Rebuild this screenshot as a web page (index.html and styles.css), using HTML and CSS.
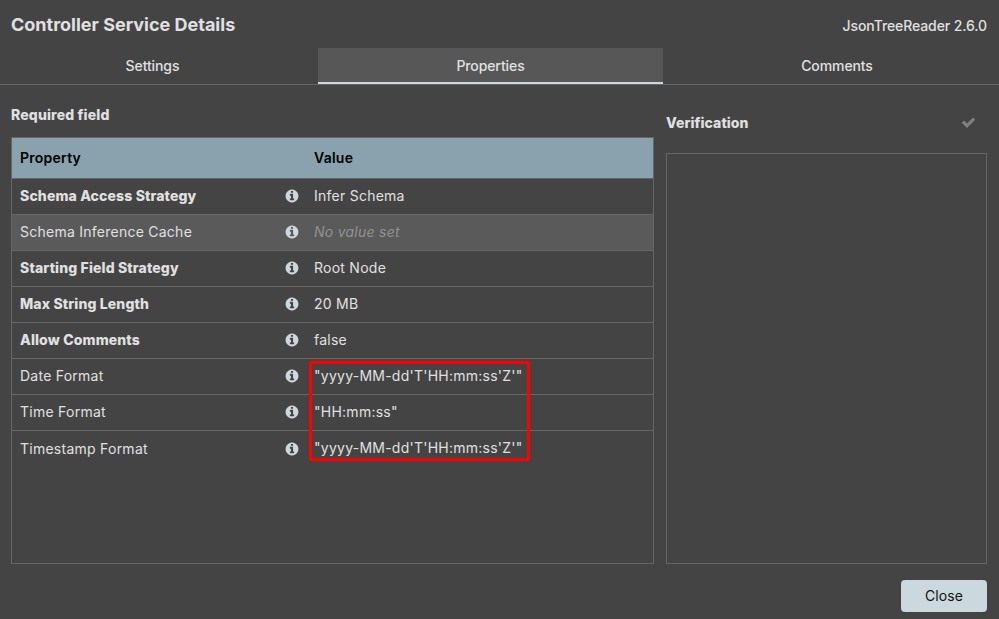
FILE: index.html
```html
<!DOCTYPE html>
<html lang="en">
<head>
<meta charset="utf-8">
<title>Controller Service Details</title>
<link rel="stylesheet" href="styles.css">
</head>
<body>
<svg width="0" height="0" class="defs">
  <symbol id="info" viewBox="-60 -60 1912 1912"><path d="M1152 1376v-160q0-14-9-23t-23-9h-96v-512q0-14-9-23t-23-9h-320q-14 0-23 9t-9 23v160q0 14 9 23t23 9h96v320h-96q-14 0-23 9t-9 23v160q0 14 9 23t23 9h448q14 0 23-9t9-23zm-128-896v-160q0-14-9-23t-23-9h-192q-14 0-23 9t-9 23v160q0 14 9 23t23 9h192q14 0 23-9t9-23zm640 416q0 209-103 385.5t-279.5 279.5-385.5 103-385.5-103-279.5-279.5-103-385.5 103-385.5 279.5-279.5 385.5-103 385.5 103 279.5 279.5 103 385.5z"/></symbol>
</svg>
<div class="dialog">
  <header class="header">
    <h2 class="title">Controller Service Details</h2>
    <span class="type">JsonTreeReader 2.6.0</span>
  </header>
  <nav class="tabs">
    <div class="tab settings">Settings</div>
    <div class="tab active">Properties</div>
    <div class="tab comments">Comments</div>
  </nav>
  <main class="content">
    <section class="properties">
      <div class="required">Required field</div>
      <div class="table">
        <div class="row head"><span class="name">Property</span><span>Value</span></div>
        <div class="row"><span class="name bold">Schema Access Strategy</span><svg class="info"><use href="#info"/></svg><span class="value">Infer Schema</span></div>
        <div class="row hover"><span class="name">Schema Inference Cache</span><svg class="info"><use href="#info"/></svg><span class="value unset">No value set</span></div>
        <div class="row"><span class="name bold">Starting Field Strategy</span><svg class="info"><use href="#info"/></svg><span class="value">Root Node</span></div>
        <div class="row"><span class="name bold">Max String Length</span><svg class="info"><use href="#info"/></svg><span class="value">20 MB</span></div>
        <div class="row"><span class="name bold">Allow Comments</span><svg class="info"><use href="#info"/></svg><span class="value">false</span></div>
        <div class="row"><span class="name">Date Format</span><svg class="info"><use href="#info"/></svg><span class="value">"yyyy-MM-dd'T'HH:mm:ss'Z'"</span></div>
        <div class="row"><span class="name">Time Format</span><svg class="info"><use href="#info"/></svg><span class="value">"HH:mm:ss"</span></div>
        <div class="row last"><span class="name">Timestamp Format</span><svg class="info"><use href="#info"/></svg><span class="value">"yyyy-MM-dd'T'HH:mm:ss'Z'"</span></div>
        <div class="highlight"></div>
      </div>
    </section>
    <section class="verification">
      <div class="verify-head"><span>Verification</span><svg class="check" viewBox="0 0 1792 1792"><path d="M1671 566q0 40-28 68l-724 724-136 136q-28 28-68 28t-68-28l-136-136-362-362q-28-28-28-68t28-68l136-136q28-28 68-28t68 28l294 295 656-657q28-28 68-28t68 28l136 136q28 28 28 68z"/></svg></div>
      <div class="results"></div>
    </section>
  </main>
  <footer class="footer"><button class="close">Close</button></footer>
</div>
</body>
</html>
```

FILE: styles.css
```css
* { box-sizing: border-box; }
body {
  margin: 0;
  background: #444;
  color: #e0e0e0;
  font: 14px/20px Inter, sans-serif;
}
.defs { display: block; }
.dialog { display: flex; flex-direction: column; height: 619px; }
.header {
  display: flex;
  justify-content: space-between;
  height: 48px;
  padding: 12px 12px 0 11px;
}
.title { margin: 0; font-size: 18px; line-height: 26px; font-weight: 700; white-space: nowrap; }
.type { padding-top: 4px; font-weight: 500; letter-spacing: -0.1px; }
.tabs {
  display: grid;
  grid-template-columns: 318px 345px 336px;
  height: 37px;
  border-bottom: 1px solid #666;
}
.tab { height: 36px; text-align: center; line-height: 36px; font-weight: 500; letter-spacing: -0.1px; }
.settings { padding-right: 13px; }
.comments { padding-left: 12px; }
.active { background: #575757; border-bottom: 2px solid #cbd8dd; }
.content {
  display: grid;
  grid-template-columns: 643px 321px;
  gap: 12px;
  height: 479px;
  padding-left: 11px;
}
.properties { display: flex; flex-direction: column; }
.required { height: 52px; padding-top: 20px; font-weight: 800; letter-spacing: 0.15px; }
.table { position: relative; height: 427px; border: 1px solid #666; letter-spacing: 0.25px; }
.row {
  display: flex;
  align-items: center;
  height: 36px;
  padding: 0 0 1px 8px;
  border-bottom: 1px solid #666;
}
.head { height: 41px; padding-bottom: 0; background: #8aa2ae; color: #000; font-weight: 600; letter-spacing: 0.25px; }
.hover { background: #5a5a5a; }
.last { border-bottom: 0; padding-bottom: 2px; }
.last .name, .last .info { margin-top: 2px; }
.name { width: 294px; }
.row .info { margin-left: -30px; }
.bold { font-weight: 800; letter-spacing: 0.14px; }
.info { flex: none; width: 16px; height: 16px; margin-right: 14px; fill: #cbd8dd; }
.value { font-weight: 430; }
.unset { color: #929292; font-style: italic; }
.highlight {
  position: absolute;
  left: 297px;
  top: 223px;
  width: 221px;
  height: 100px;
  border: 3px solid #f00;
  border-radius: 2px;
}
.verification { display: flex; flex-direction: column; }
.verify-head {
  display: flex;
  align-items: center;
  justify-content: space-between;
  height: 68px;
  padding: 8px 11px 0 0;
  font-weight: 800;
  letter-spacing: 0.08px;
}
.check { width: 15px; height: 15px; margin-bottom: 1px; fill: #808080; }
.results { flex: 1; border: 1px solid #666; }
.footer { display: flex; justify-content: flex-end; padding: 16px 12px 0 0; }
.close {
  width: 86px;
  height: 32px;
  padding: 0;
  border: 0;
  border-radius: 4px;
  background: #cbd8dd;
  color: #111;
  font: 14px/20px Inter, sans-serif;
  letter-spacing: 0.1px;
}
```
